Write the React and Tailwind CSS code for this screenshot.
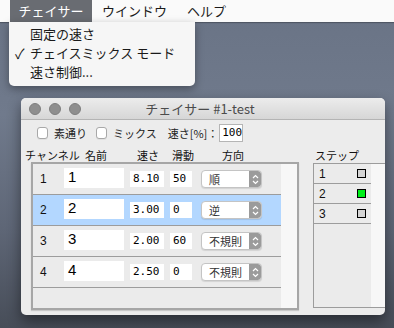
import React from "react";

const jp = { fontFamily: '"Noto Sans CJK JP", "Noto Sans", sans-serif' };
const mono = { fontFamily: '"DejaVu Sans Mono", "Liberation Mono", monospace' };

const rows = [
  { ch: "1", name: "1", speed: "8.10", slide: "50", dir: "順" },
  { ch: "2", name: "2", speed: "3.00", slide: "0", dir: "逆", selected: true },
  { ch: "3", name: "3", speed: "2.00", slide: "60", dir: "不規則" },
  { ch: "4", name: "4", speed: "2.50", slide: "0", dir: "不規則" },
];

const steps = [
  { n: "1", on: false },
  { n: "2", on: true },
  { n: "3", on: false },
];

const Stepper = () => (
  <div className="w-[12px] h-full bg-[#9b9b9b] rounded-r-[3px] flex items-center justify-center">
    <svg width="7" height="11" viewBox="0 0 7 11" fill="none">
      <path d="M1 4 L3.5 1.5 L6 4" stroke="white" strokeWidth="1.2" />
      <path d="M1 7 L3.5 9.5 L6 7" stroke="white" strokeWidth="1.2" />
    </svg>
  </div>
);

const Checkbox = () => (
  <div className="w-[11px] h-[12px] rounded-[3px] bg-white border border-[#a8a8a8] shadow-[0_1px_0_rgba(0,0,0,0.05)]" />
);

export default function App() {
  return (
    <div
      className="relative w-[394px] h-[328px] overflow-hidden flex flex-col bg-[linear-gradient(180deg,#697385_0%,#707a8c_35%,#5e6676_70%,#474d58_100%)]"
      style={jp}
    >
      {/* menu bar */}
      <div className="h-[22px] shrink-0 bg-[#fafafa] flex items-stretch text-[13px] text-[#1a1a1a] shadow-[0_1px_1px_rgba(0,0,0,0.25)]">
        <div className="ml-[10px] w-[82px] bg-[#696c72] text-white flex items-center justify-center">
          チェイサー
        </div>
        <div className="ml-[10px] flex items-center">ウインドウ</div>
        <div className="ml-[20px] flex items-center">ヘルプ</div>
      </div>

      {/* dropdown */}
      <div className="absolute z-10 top-[22px] left-[9px] w-[186px] h-[64px] bg-[#f6f6f6] rounded-b-[5px] shadow-[0_3px_8px_rgba(0,0,0,0.35)] pt-[2px] text-[13px] text-[#1a1a1a]">
        <div className="h-[19px] flex items-center pl-[21px]">固定の速さ</div>
        <div className="h-[19px] flex items-center pl-[6px]">
          <span className="w-[15px] text-[14px] leading-none">✓</span>
          <span>チェイスミックス モード</span>
        </div>
        <div className="h-[19px] flex items-center pl-[21px]">速さ制御...</div>
      </div>

      {/* window */}
      <div className="mt-[76px] ml-[21px] w-[364px] h-[217px] shrink-0 rounded-[5px] bg-[#ececec] overflow-hidden shadow-[0_6px_14px_rgba(0,0,0,0.45)] flex flex-col">
        {/* title bar */}
        <div className="h-[22px] shrink-0 bg-[linear-gradient(180deg,#ececec,#d6d6d6)] border-b border-[#b4b4b4] flex items-center pl-[8px] gap-[8px]">
          <div className="w-[12px] h-[12px] rounded-full bg-[#8e8e8e] border border-[#7e7e7e]" />
          <div className="w-[12px] h-[12px] rounded-full bg-[#8e8e8e] border border-[#7e7e7e]" />
          <div className="w-[12px] h-[12px] rounded-full bg-[#8e8e8e] border border-[#7e7e7e]" />
          <div className="flex-1 text-center text-[13px] text-[#4b4b4b] pr-[74px]">
            チェイサー #1-test
          </div>
        </div>

        {/* toolbar */}
        <div className="mt-[4px] h-[18px] flex items-center text-[11px] text-[#222]">
          <div className="ml-[16px]">
            <Checkbox />
          </div>
          <span className="ml-[6px]">素通り</span>
          <div className="ml-[9px]">
            <Checkbox />
          </div>
          <span className="ml-[6px]">ミックス</span>
          <span className="ml-[11px]">速さ[%]：</span>
          <div
            className="ml-[1px] w-[24px] h-[18px] bg-white border border-[#b5b5b5] flex items-center pl-[2px] text-[11px] text-black"
            style={mono}
          >
            100
          </div>
        </div>

        {/* body */}
        <div className="mt-[7px] flex flex-1 min-h-0">
          {/* left: channels */}
          <div className="flex flex-col">
            <div className="h-[13px] flex items-center text-[11px] text-[#111] leading-none">
              <span className="ml-[4px] w-[60px]">チャンネル</span>
              <span className="w-[52px]">名前</span>
              <span className="w-[35px]">速さ</span>
              <span className="w-[50px]">滑動</span>
              <span>方向</span>
            </div>
            <div className="ml-[10px] w-[268px] h-[148px] border-2 border-[#a6a6a6] shadow-[0_1px_1px_rgba(0,0,0,0.15)] bg-[#ebebeb] flex">
              <div className="w-[248px] flex flex-col">
                {rows.map((r) => (
                  <div
                    key={r.ch}
                    className={`h-[31px] shrink-0 border-b border-[#9c9c9c] flex items-center ${
                      r.selected ? "bg-[#b3d7ff]" : ""
                    }`}
                  >
                    <span
                      className="ml-[7px] w-[24px] text-[12px] text-[#111]"
                      style={{ fontFamily: '"Liberation Sans", sans-serif' }}
                    >
                      {r.ch}
                    </span>
                    <div
                      className="w-[60px] h-[20px] bg-white flex items-center pl-[4px] text-[15px] text-black -mt-[3px]"
                      style={{ fontFamily: '"Liberation Sans", sans-serif' }}
                    >
                      {r.name}
                    </div>
                    <div
                      className="ml-[6px] w-[34px] h-[16px] bg-white flex items-center pl-[3px] text-[11px] text-black"
                      style={mono}
                    >
                      {r.speed}
                    </div>
                    <div
                      className="ml-[6px] w-[22px] h-[16px] bg-white flex items-center pl-[3px] text-[11px] text-black"
                      style={mono}
                    >
                      {r.slide}
                    </div>
                    <div className="ml-[9px] w-[61px] h-[18px] bg-white border border-[#c4c4c4] rounded-[4px] shadow-[0_1px_1px_rgba(0,0,0,0.1)] flex items-stretch overflow-hidden">
                      <div className="flex-1 flex items-center pl-[7px] text-[11px] text-[#333]">
                        {r.dir}
                      </div>
                      <Stepper />
                    </div>
                  </div>
                ))}
              </div>
              <div className="flex-1 bg-[#f7f7f7]" />
            </div>
          </div>

          {/* right: steps */}
          <div className="ml-[14px] flex flex-col flex-1">
            <div className="h-[13px] pl-[2px] flex items-center text-[11px] text-[#111] leading-none">
              ステップ
            </div>
            <div className="mt-[1px] h-[145px] w-[72px] border border-r-0 border-[#9c9c9c] bg-[#ebebeb] flex">
              <div className="w-[57px] flex flex-col">
                {steps.map((s) => (
                  <div
                    key={s.n}
                    className="h-[20px] shrink-0 border-b border-[#9c9c9c] flex items-center"
                  >
                    <span
                      className="ml-[5px] w-[38px] text-[12px] text-[#111]"
                      style={{ fontFamily: '"Liberation Sans", sans-serif' }}
                    >
                      {s.n}
                    </span>
                    <div
                      className={`w-[9px] h-[9px] border border-black ${
                        s.on ? "bg-[#00f01a]" : "bg-[#d4d4d4]"
                      }`}
                    />
                  </div>
                ))}
              </div>
              <div className="flex-1 bg-[#f7f7f7]" />
            </div>
          </div>
        </div>
      </div>
    </div>
  );
}
